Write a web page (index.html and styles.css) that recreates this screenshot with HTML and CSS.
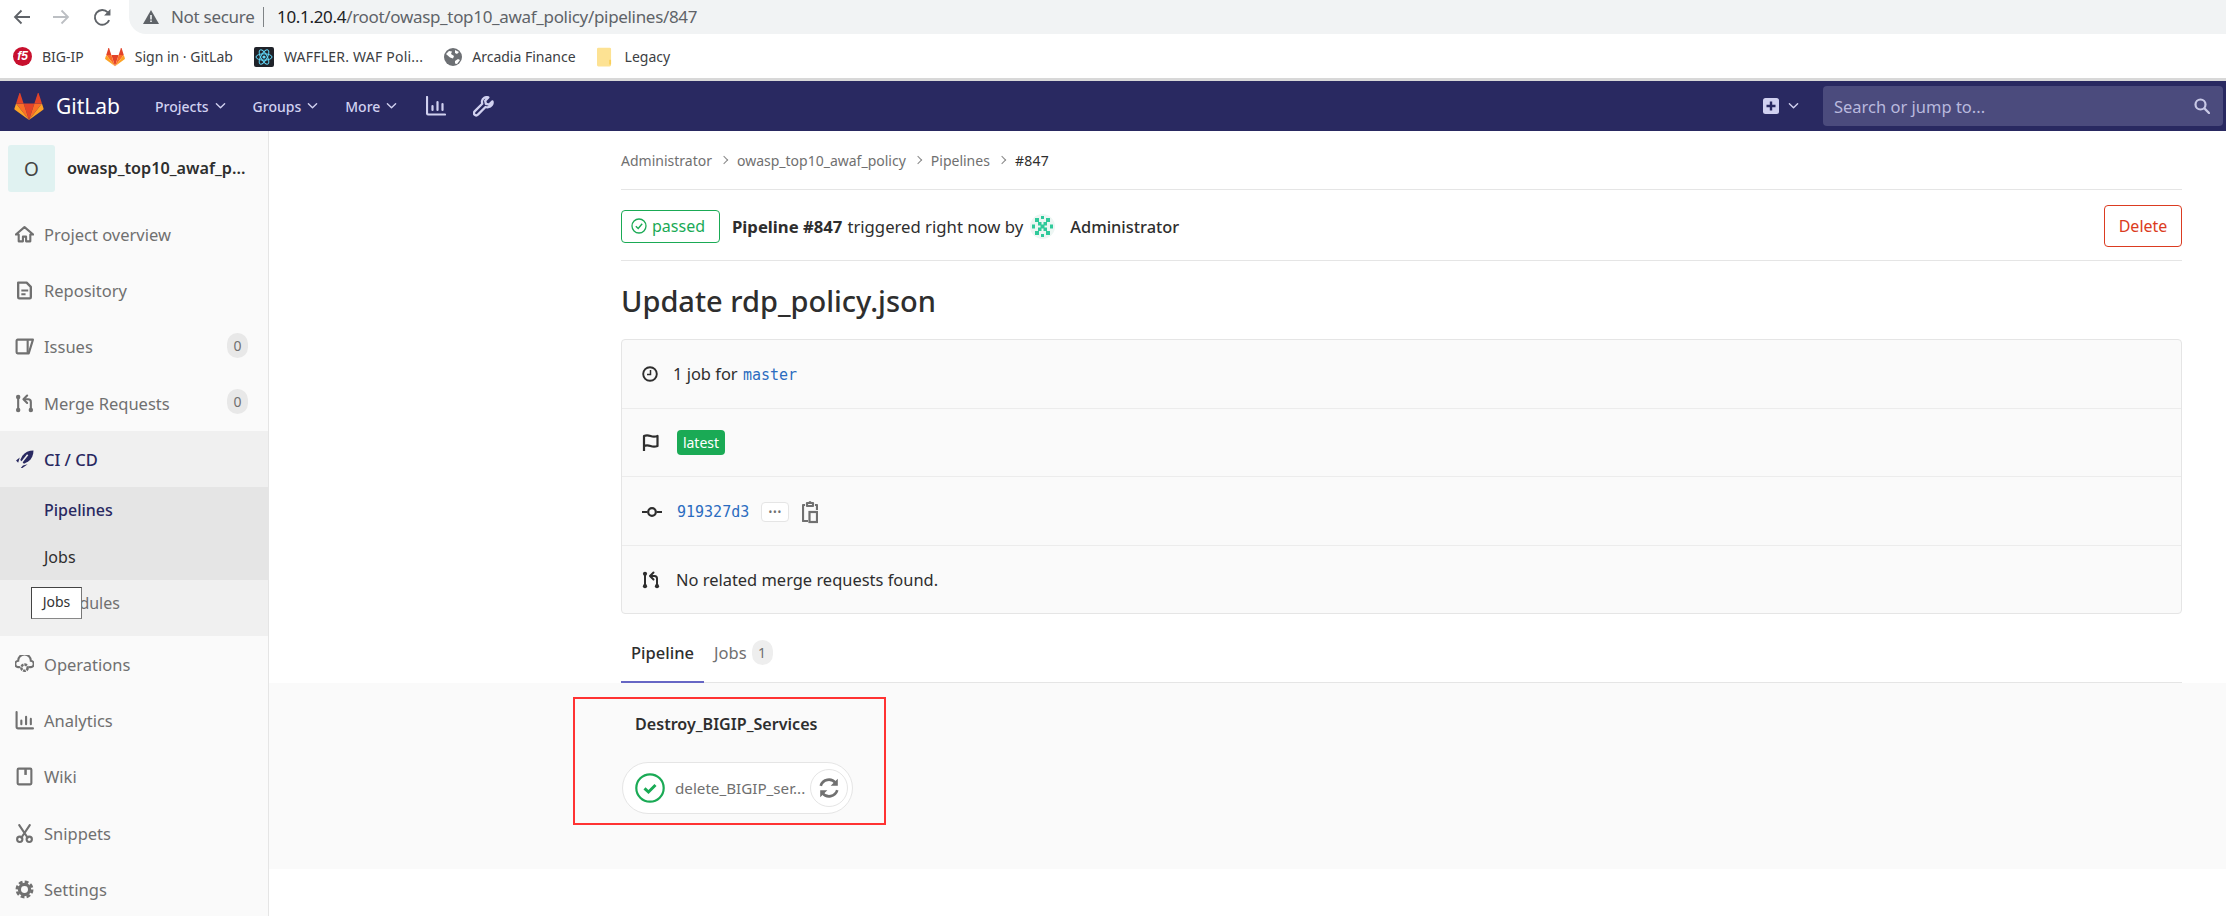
FILE: index.html
```html
<!DOCTYPE html>
<html lang="en">
<head>
<meta charset="utf-8">
<title>Pipeline #847</title>
<link rel="stylesheet" href="styles.css">
</head>
<body>
<svg class="defs" width="0" height="0" aria-hidden="true">
  <defs>
    <symbol id="tanuki" viewBox="0 0 36 33">
      <path fill="#e24329" d="M18 33l6.600-20.300H11.400z"/>
      <path fill="#fc6d26" d="M18 33L11.400 12.700H2.200z"/>
      <path fill="#fca326" d="M2.200 12.700L.2 18.900c-.2.600 0 1.200.5 1.600L18 33z"/>
      <path fill="#e24329" d="M2.200 12.700h9.200L7.400.6c-.2-.6-1.100-.6-1.300 0z"/>
      <path fill="#fc6d26" d="M18 33l6.600-20.300h9.200z"/>
      <path fill="#fca326" d="M33.800 12.700l2 6.200c.2.600 0 1.200-.5 1.600L18 33z"/>
      <path fill="#e24329" d="M33.800 12.700h-9.200L28.600.6c.2-.6 1.100-.6 1.300 0z"/>
    </symbol>
    <symbol id="chev" viewBox="0 0 12 8">
      <path d="M1.500 1.500L6 6l4.500-4.500" fill="none" stroke="currentColor" stroke-width="1.500" stroke-linecap="round" stroke-linejoin="round"/>
    </symbol>
    <symbol id="merge" viewBox="0 0 18 18">
      <g fill="none" stroke="currentColor" stroke-width="2" stroke-linecap="round" stroke-linejoin="round">
        <path d="M3 3v11.500"/><path d="M15 14.500V7.500c0-1.500-1-2.500-2.500-2.500H9"/><path d="M11.500 1.500L8 5l3.500 3.500"/>
      </g>
      <circle cx="3" cy="2.800" r="2.100" fill="currentColor"/><circle cx="3" cy="15.200" r="2.100" fill="currentColor"/><circle cx="15" cy="15.200" r="2.100" fill="currentColor"/>
    </symbol>
  </defs>
</svg>

<header class="chrome">
  <div class="chrome-bar">
    <svg class="ch-ico back" viewBox="0 0 18 16"><path d="M17 8H2M8.500 1.500L2 8l6.500 6.500" fill="none" stroke="currentColor" stroke-width="1.800"/></svg>
    <svg class="ch-ico fwd" viewBox="0 0 18 16"><path d="M1 8h15M9.500 1.500L16 8l-6.500 6.500" fill="none" stroke="currentColor" stroke-width="1.800"/></svg>
    <svg class="ch-ico reload" viewBox="0 0 18 18"><path d="M15.300 11.500A7 7 0 1 1 14 4.200" fill="none" stroke="currentColor" stroke-width="1.800"/><path d="M16.500 1v6h-6z" fill="currentColor"/></svg>
    <div class="omnibox">
      <svg class="warn" viewBox="0 0 16 14"><path d="M8 0l8 14H0z" fill="#5f6368"/><path d="M7.200 5h1.600v4.500H7.200zM7.200 10.500h1.600V12H7.200z" fill="#f1f3f4"/></svg>
      <span class="not-secure">Not secure</span>
      <span class="omni-sep"></span>
      <span class="url"><b>10.1.20.4</b>/root/owasp_top10_awaf_policy/pipelines/847</span>
    </div>
  </div>
  <nav class="bookmarks">
    <a class="bm"><span class="f5">f5</span>BIG-IP</a>
    <a class="bm"><svg class="bm-ico"><use href="#tanuki"/></svg>Sign in · GitLab</a>
    <a class="bm bm-wide"><svg class="bm-ico" viewBox="0 0 20 20"><rect width="20" height="20" rx="2" fill="#20232a"/><g fill="none" stroke="#61dafb" stroke-width="1"><ellipse cx="10" cy="10" rx="8" ry="3.200"/><ellipse cx="10" cy="10" rx="8" ry="3.200" transform="rotate(60 10 10)"/><ellipse cx="10" cy="10" rx="8" ry="3.200" transform="rotate(120 10 10)"/></g><circle cx="10" cy="10" r="1.600" fill="#61dafb"/></svg>WAFFLER. WAF Poli...</a>
    <a class="bm"><svg class="bm-ico globe" viewBox="0 0 18 18"><circle cx="9" cy="9" r="9" fill="#6d7074"/><path d="M2 6l3-3 3 .5-1 2.500 3 2-1 2.500-3-1zM11 13l3-2 2 1-3 4-2-.5zM11 2l4 2-2 2-2-1z" fill="#fff"/></svg>Arcadia Finance</a>
    <a class="bm"><svg class="bm-ico folder" viewBox="0 0 16 20"><path d="M1.500 0h12A1.500 1.500 0 0 1 15 1.500V18.500A1.500 1.500 0 0 1 13.500 20h-12A1.500 1.500 0 0 1 0 18.500V1.500A1.500 1.500 0 0 1 1.500 0z" fill="#fde293"/><path d="M13 13h2v5h-2z" fill="#f9cf5a"/></svg>Legacy</a>
  </nav>
</header>

<header class="navbar">
  <a class="brand"><svg class="logo"><use href="#tanuki"/></svg><span>GitLab</span></a>
  <a class="nav-link">Projects<svg class="chev"><use href="#chev"/></svg></a>
  <a class="nav-link">Groups<svg class="chev"><use href="#chev"/></svg></a>
  <a class="nav-link">More<svg class="chev"><use href="#chev"/></svg></a>
  <svg class="nav-ico" viewBox="0 0 20 20"><path d="M1 1v16c0 1 .5 1.500 1.500 1.500H19" fill="none" stroke="currentColor" stroke-width="2.200" stroke-linecap="round"/><path d="M6.500 10v4M11.500 6v8M16.500 8v6" stroke="currentColor" stroke-width="2.200" stroke-linecap="round"/></svg>
  <svg class="nav-ico wrench" viewBox="0 0 20 20"><path d="M18.500 5.200l-3.200 3-3-.7-.7-3 3-3.200c-2.700-.8-5.500.7-6 3.500-.2 1 0 1.800.2 2.600l-7 7c-1.200 1.200-1.200 2.500-.3 3.400s2.200.9 3.400-.3l7-7c.8.300 1.700.4 2.600.2 2.800-.5 4.800-3.200 4-5.500z" fill="none" stroke="currentColor" stroke-width="2.200" stroke-linejoin="round"/></svg>
  <div class="nav-right">
    <svg class="plus" viewBox="0 0 16 16"><rect width="16" height="16" rx="2.500" fill="#d1d1f0"/><path d="M8 3.500v9M3.500 8h9" stroke="#292961" stroke-width="2.400"/></svg>
    <svg class="chev plus-chev"><use href="#chev"/></svg>
    <div class="search">
      <span>Search or jump to...</span>
      <svg class="search-ico" viewBox="0 0 16 16"><circle cx="6.500" cy="6.500" r="5" fill="none" stroke="currentColor" stroke-width="2.200"/><path d="M10.500 10.500L15 15" stroke="currentColor" stroke-width="2.400" stroke-linecap="round"/></svg>
    </div>
  </div>
</header>

<div class="shell">
  <aside class="sidebar">
    <div class="project">
      <span class="avatar">O</span>
      <span class="project-name">owasp_top10_awaf_p...</span>
    </div>
    <ul class="menu">
      <li class="item"><svg class="ico" viewBox="0 0 18 18"><path d="M9 2L.8 9h2.700v6.500h4V11h3v4.500h4V9h2.700z" fill="none" stroke="currentColor" stroke-width="2" stroke-linejoin="round"/></svg>Project overview</li>
      <li class="item"><svg class="ico" viewBox="0 0 18 18"><path d="M3 1.500h8l4 4v10a1 1 0 0 1-1 1H4a1 1 0 0 1-1-1z" fill="none" stroke="currentColor" stroke-width="2.200" stroke-linejoin="round"/><path d="M6 9h6.500M6 12.500h4" stroke="currentColor" stroke-width="2"/></svg>Repository</li>
      <li class="item"><svg class="ico" viewBox="0 0 18 18"><path d="M2.500 2.500H17L13 15.500H2.500a1 1 0 0 1-1-1v-11a1 1 0 0 1 1-1z" fill="none" stroke="currentColor" stroke-width="2" stroke-linejoin="round"/><path d="M12 3v12" stroke="currentColor" stroke-width="2"/></svg>Issues<span class="count">0</span></li>
      <li class="item"><svg class="ico"><use href="#merge"/></svg>Merge Requests<span class="count">0</span></li>
      <li class="group">
        <div class="item active-head"><svg class="ico" viewBox="0 0 18 18"><path d="M17.500.5c-4.500 0-8 1.500-10.500 5L5 9.500l3.500 3.500 4-2c3.500-2.500 5-6 5-10.500z" fill="currentColor"/><path d="M12 4.500L6 12" stroke="#f0f0f0" stroke-width="1.500"/><path d="M1 10l3.500-3L3 12zM7 17l5-3.500-4.500 1.200-2 2.300z" fill="currentColor"/></svg>CI / CD</div>
        <ul class="submenu">
          <li class="sub-hi sub-active">Pipelines</li>
          <li class="sub-hi sub-jobs">Jobs</li>
          <li class="sub-plain">Schedules<span class="tip">Jobs</span></li>
        </ul>
      </li>
      <li class="item"><svg class="ico" viewBox="0 0 18 18"><path d="M4 11.500H3.500a3 3 0 0 1-.5-6 6 6 0 0 1 12 0 3 3 0 0 1-.5 6H14" fill="none" stroke="currentColor" stroke-width="2" stroke-linecap="round"/><circle cx="9" cy="12" r="3" fill="none" stroke="currentColor" stroke-width="2.400" stroke-dasharray="2.600 .8"/></svg>Operations</li>
      <li class="item"><svg class="ico" viewBox="0 0 18 18"><path d="M1.500 1v14c0 1 .5 1.500 1.500 1.500h14" fill="none" stroke="currentColor" stroke-width="2" stroke-linecap="round"/><path d="M6 9v3.500M10.500 5.500v7M15 7.500v5" stroke="currentColor" stroke-width="2" stroke-linecap="round"/></svg>Analytics</li>
      <li class="item"><svg class="ico" viewBox="0 0 18 18"><rect x="2.500" y="1.500" width="13" height="15" rx="1" fill="none" stroke="currentColor" stroke-width="2"/><path d="M10 2v5.500" stroke="currentColor" stroke-width="2.400"/></svg>Wiki</li>
      <li class="item"><svg class="ico" viewBox="0 0 18 18"><path d="M4 1l8 12M14 1L6 13" stroke="currentColor" stroke-width="2" stroke-linecap="round"/><circle cx="4.500" cy="14.500" r="2.500" fill="none" stroke="currentColor" stroke-width="2"/><circle cx="13.500" cy="14.500" r="2.500" fill="none" stroke="currentColor" stroke-width="2"/></svg>Snippets</li>
      <li class="item"><svg class="ico" viewBox="0 0 18 18"><circle cx="9" cy="9" r="4.800" fill="none" stroke="currentColor" stroke-width="3"/><circle cx="9" cy="9" r="7.200" fill="none" stroke="currentColor" stroke-width="2.600" stroke-dasharray="3.600 2.050"/></svg>Settings</li>
    </ul>
  </aside>

  <main class="main">
    <div class="container">
      <ol class="crumbs">
        <li>Administrator</li>
        <li class="crumb-sep"></li>
        <li>owasp_top10_awaf_policy</li>
        <li class="crumb-sep"></li>
        <li>Pipelines</li>
        <li class="crumb-sep"></li>
        <li class="crumb-current">#847</li>
      </ol>
      <div class="pipeline-head">
        <span class="status"><svg class="status-ico" viewBox="0 0 16 16"><circle cx="8" cy="8" r="7" fill="none" stroke="currentColor" stroke-width="1.300"/><path d="M4.800 8.200L7.200 10.500 11.200 5.800" fill="none" stroke="currentColor" stroke-width="1.400"/></svg>passed</span>
        <strong class="pipe-id">Pipeline #847</strong>
        <span class="pipe-by">triggered right now by</span>
        <svg class="identicon" viewBox="0 0 25 25"><circle cx="12.500" cy="12.500" r="12.500" fill="#edf6f3"/><g fill="#2fc99a"><rect x="5" y="4" width="4" height="4"/><rect x="16" y="4" width="4" height="4"/><rect x="8" y="8" width="3.500" height="3.500"/><rect x="13.500" y="8" width="3.500" height="3.500"/><rect x="10.500" y="10.500" width="4" height="4"/><rect x="8" y="13.500" width="3.500" height="3.500"/><rect x="13.500" y="13.500" width="3.500" height="3.500"/><rect x="5" y="17" width="4" height="4"/><rect x="16" y="17" width="4" height="4"/><rect x="2" y="10.500" width="3" height="4"/><rect x="20" y="10.500" width="3" height="4"/><rect x="11" y="2" width="3" height="3"/><rect x="11" y="20" width="3" height="3"/></g></svg>
        <span class="pipe-user">Administrator</span>
        <button class="delete">Delete</button>
      </div>
      <h1 class="title">Update rdp_policy.json</h1>
      <section class="card">
        <div class="card-row"><svg class="card-ico" viewBox="0 0 16 16"><circle cx="8" cy="8" r="6.800" fill="none" stroke="currentColor" stroke-width="1.900"/><path d="M8.500 4v4.500H5" fill="none" stroke="currentColor" stroke-width="1.500"/></svg><span>1 job for <code class="ref">master</code></span></div>
        <div class="card-row"><svg class="card-ico flag" viewBox="0 0 18 18"><path d="M2 17V2c2-1 4-1 6.500 0s4.500 1 7 0v10c-2.500 1-4.500 1-7 0s-4.500-1-6.500 0" fill="none" stroke="currentColor" stroke-width="2.200" stroke-linejoin="round"/></svg><span class="tag">latest</span></div>
        <div class="card-row row-commit"><svg class="card-ico commit" viewBox="0 0 20 12"><circle cx="10" cy="6" r="3.800" fill="none" stroke="currentColor" stroke-width="2.200"/><path d="M0 6h5.500M14.500 6H20" stroke="currentColor" stroke-width="2.200"/></svg><code class="sha">919327d3</code><span class="dots">•••</span><svg class="clip" viewBox="0 0 16 24"><path d="M5 3h6v3H5zM3 5H1v16h5M13 5h2v5" fill="none" stroke="currentColor" stroke-width="2.200" stroke-linejoin="round"/><circle cx="8" cy="2.500" r="1.500" fill="currentColor"/><rect x="7.500" y="12" width="7.500" height="10" fill="none" stroke="currentColor" stroke-width="2.200"/></svg></div>
        <div class="card-row"><svg class="card-ico mr"><use href="#merge"/></svg><span class="no-mr">No related merge requests found.</span></div>
      </section>
      <div class="tabs">
        <span class="tab tab-active">Pipeline</span>
        <span class="tab">Jobs<span class="tab-count">1</span></span>
      </div>
    </div>
    <div class="graph-band">
      <div class="highlight">
        <div class="stage-title">Destroy_BIGIP_Services</div>
        <div class="job">
          <svg class="job-status" viewBox="0 0 30 30"><circle cx="15" cy="15" r="13.700" fill="#fff" stroke="#1aaa55" stroke-width="2.200"/><path d="M9.500 15.300l4 3.700 7-7" fill="none" stroke="#1aaa55" stroke-width="3"/></svg>
          <span class="job-name">delete_BIGIP_ser...</span>
          <span class="retry"><svg viewBox="0 0 20 20"><path d="M2.500 8A7.700 7.700 0 0 1 16 5.500M17.500 12A7.700 7.700 0 0 1 4 14.500" fill="none" stroke="currentColor" stroke-width="2.400"/><path d="M18 1.500V8h-6.500zM2 18.500V12h6.500z" fill="currentColor"/></svg></span>
        </div>
      </div>
    </div>
  </main>
</div>
</body>
</html>
```
FILE: styles.css
```css
* { box-sizing: border-box; }
html, body { margin: 0; padding: 0; }
body {
  width: 2226px;
  height: 916px;
  overflow: hidden;
  background: #fff;
  font-family: "Noto Sans", "Open Sans", "Liberation Sans", sans-serif;
  color: #2e2e2e;
  display: flex;
  flex-direction: column;
}
ul, ol { list-style: none; margin: 0; padding: 0; }
svg { display: block; flex: none; }
.defs { position: absolute; }

/* browser chrome */
.chrome { flex: none; }
.chrome-bar { height: 34px; display: flex; align-items: flex-start; }
.ch-ico { width: 18px; height: 16px; margin-top: 9px; color: #5f6368; }
.back { margin-left: 13px; }
.fwd { margin-left: 21px; color: #bcbfc3; }
.reload { width: 19px; height: 19px; margin-left: 23px; margin-top: 8px; }
.omnibox {
  flex: 1;
  height: 34px;
  margin-left: 17px;
  background: #f1f3f4;
  border-radius: 0 0 0 17px;
  display: flex;
  align-items: center;
  font-size: 17px;
  color: #5f6368;
  padding-bottom: 1px;
}
.warn { width: 16px; height: 14px; margin-left: 14px; }
.not-secure { margin-left: 12px; width: 84px; letter-spacing: -.3px; white-space: nowrap; }
.omni-sep { width: 1px; height: 20px; background: #7f8386; margin-left: 8px; }
.url { margin-left: 13px; letter-spacing: -.32px; white-space: nowrap; }
.url b { font-weight: 400; color: #202124; }
.bookmarks {
  height: 47px;
  padding: 1px 0 0 13px;
  display: flex;
  align-items: center;
  gap: 21px;
  font-size: 14px;
  color: #3c4043;
  border-bottom: 3px solid #d8d8d8;
}
.bm { display: flex; align-items: center; gap: 10px; white-space: nowrap; }
.bm-wide { letter-spacing: .22px; }
.bm-ico { width: 20px; height: 20px; }
.globe { width: 18px; height: 18px; }
.folder { width: 15px; height: 20px; margin-right: 3px; }
.f5 {
  width: 19px; height: 19px; border-radius: 50%;
  background: #c8102e;
  color: #fff;
  font: italic 700 12px/18px "Liberation Sans", sans-serif;
  text-align: center;
}

/* top nav */
.navbar {
  flex: none;
  height: 50px;
  background: #292961;
  display: flex;
  align-items: center;
  color: #d1d1f0;
  font-size: 14px;
  font-weight: 500;
}
.brand { display: flex; align-items: center; color: #fff; font-size: 21px; font-weight: 400; margin-left: 14px; width: 141px; }
.logo { width: 30px; height: 27px; margin-right: 12px; }
.nav-link { display: flex; align-items: center; gap: 6px; margin-right: 27px; white-space: nowrap; }
.chev { width: 11px; height: 8px; }
.nav-ico { width: 20px; height: 20px; margin-left: 2px; margin-right: 25px; }
.wrench { width: 21px; height: 21px; }
.nav-right { margin-left: auto; display: flex; align-items: center; }
.plus { width: 16px; height: 16px; }
.plus-chev { margin-left: 9px; }
.search {
  width: 400px;
  height: 40px;
  margin: 0 3px 0 24px;
  background: #4b4b7d;
  border-radius: 4px;
  display: flex;
  align-items: center;
  justify-content: space-between;
  padding: 0 13px 0 11px;
  font-size: 16.500px;
  font-weight: 400;
  color: #b9b9de;
}
.search-ico { width: 16px; height: 16px; color: #c9c9e6; }

/* layout */
.shell { flex: 1; display: flex; min-height: 0; }
.sidebar {
  flex: none;
  width: 269px;
  background: #fafafa;
  border-right: 1px solid #e5e5e5;
  font-size: 16.500px;
  color: #707070;
}
.project { height: 75px; padding: 14px 0 0 8px; display: flex; align-items: flex-start; }
.avatar {
  width: 47px; height: 47px;
  border-radius: 3px;
  background: #e0f2f1;
  color: #444;
  font-size: 19px;
  display: flex; align-items: center; justify-content: center;
}
.project-name { margin: 11px 0 0 12px; font-size: 16.200px; font-weight: 600; color: #2e2e2e; white-space: nowrap; line-height: 24px; }
.item { height: 56.300px; display: flex; align-items: center; padding: 0 20px 0 15px; position: relative; }
.ico { width: 19px; height: 19px; margin-right: 10px; color: #707070; }
.count {
  margin-left: auto;
  width: 21px; height: 25px;
  border-radius: 11px;
  background: #e8e8e8;
  font-size: 14px;
  display: flex; align-items: center; justify-content: center;
  margin-top: -3px;
}
.group { background: #f0f0f0; height: 205px; }
.active-head { color: #292961; font-weight: 500; height: 56px; }
.active-head .ico { color: #292961; }
.submenu { font-size: 16px; }
.sub-hi { background: #e5e5e5; height: 46.500px; display: flex; align-items: center; padding-left: 44px; color: #2e2e2e; }
.sub-active { color: #292961; font-weight: 500; }
.sub-plain { position: relative; padding-left: 44px; height: 46px; line-height: 46px; color: #707070; }
.tip {
  position: absolute;
  left: 31px;
  top: 7px;
  width: 51px;
  height: 32px;
  background: #fff;
  border: 1px solid #444;
  border-right-color: #777;
  border-bottom-color: #888;
  font-size: 14px;
  line-height: 28px;
  text-align: center;
  color: #333;
}

.main { flex: 1; min-width: 0; }
.container { padding: 0 44px 0 352px; }
.crumbs {
  height: 59px;
  display: flex;
  align-items: center;
  gap: 8px;
  font-size: 14px;
  color: #707070;
  border-bottom: 1px solid #e5e5e5;
}
.crumb-sep { width: 6px; height: 6px; border-top: 1px solid #888; border-right: 1px solid #888; transform: rotate(45deg); margin: 0 1.500px; }
.crumb-current { color: #2e2e2e; letter-spacing: .3px; }
.pipeline-head {
  height: 71px;
  padding-top: 2px;
  display: flex;
  align-items: center;
  font-size: 16.700px;
  border-bottom: 1px solid #e5e5e5;
}
.status {
  width: 99px; height: 33px;
  border: 1px solid #1aaa55;
  border-radius: 4px;
  color: #1aaa55;
  display: flex; align-items: center;
  padding-left: 9px;
  gap: 5px;
  margin-right: 12px;
  font-size: 16px;
}
.status-ico { width: 16px; height: 16px; }
.pipe-id { font-weight: 700; margin-right: 5px; }
.identicon { width: 25px; height: 25px; margin: 0 15px 0 7px; }
.pipe-user { font-weight: 500; font-size: 16.400px; }
.delete {
  margin-left: auto;
  width: 78px; height: 42px;
  border: 1px solid #db3b21;
  border-radius: 4px;
  background: #fff;
  color: #db3b21;
  font: inherit;
  font-size: 16px;
  padding: 0;
}
.title { margin: 0; height: 78px; font-size: 29px; font-weight: 500; line-height: 80px; color: #2e2e2e; }
.card {
  height: 275px;
  background: #fafafa;
  border: 1px solid #e5e5e5;
  border-radius: 4px;
  font-size: 16.450px;
}
.card-row {
  height: 68.700px;
  display: flex;
  align-items: center;
  padding-left: 20px;
  border-bottom: 1px solid #ececec;
  color: #2e2e2e;
}
.row-commit { padding-top: 2px; }
.card-row:last-child { border-bottom: 0; height: auto; flex: 1; padding-top: 22px; }
.card-ico { width: 16px; height: 16px; margin-right: 15px; }
.flag { width: 18px; height: 18px; margin-right: 17px; }
.commit { width: 20px; height: 12px; margin-right: 15px; }
.mr { width: 18px; height: 18px; margin-right: 16px; }
.ref, .sha { font-family: "DejaVu Sans Mono", "Liberation Mono", monospace; font-size: 15px; color: #2b6cc0; }
.ref { margin-left: 1px; }
.tag {
  width: 48px; height: 25px;
  border-radius: 4px;
  background: #1aaa55;
  color: #fff;
  font-size: 14px;
  display: flex; align-items: center; justify-content: center;
}
.dots {
  width: 28px; height: 20px;
  margin-left: 12px;
  border: 1px solid #e5e5e5;
  border-radius: 4px;
  background: #fff;
  color: #707070;
  font-size: 10px;
  letter-spacing: .8px;
  display: flex; align-items: center; justify-content: center;
}
.clip { width: 16px; height: 24px; margin-left: 13px; color: #707070; }
.tabs {
  height: 69px;
  display: flex;
  align-items: stretch;
  gap: 10px;
  border-bottom: 1px solid #e5e5e5;
  font-size: 16.500px;
}
.tab { display: flex; align-items: center; color: #707070; padding: 17px 0 8px; }
.tab-active { width: 83px; justify-content: center; color: #2e2e2e; font-weight: 500; border-bottom: 2px solid #6666c4; margin-bottom: -1px; padding-bottom: 7px; }
.tab-count {
  width: 21px; height: 25px;
  margin-left: 5px;
  border-radius: 11px;
  background: #eee;
  color: #707070;
  font-size: 14px;
  display: flex; align-items: center; justify-content: center;
}
.graph-band { height: 186px; background: #fafafa; padding: 14px 0 0 304px; }
.highlight {
  width: 313px;
  height: 128px;
  border: 2px solid #f33;
  padding-top: 13px;
}
.stage-title { margin-left: 60px; font-size: 16.100px; font-weight: 600; line-height: 24px; color: #2e2e2e; white-space: nowrap; }
.job {
  width: 231px;
  height: 52px;
  margin: 26px 0 0 47px;
  background: #fff;
  border: 1px solid #e5e5e5;
  border-radius: 26px;
  display: flex;
  align-items: center;
  padding-left: 12px;
  font-size: 15.200px;
  color: #707070;
}
.job-status { width: 30px; height: 30px; }
.job-name { margin-left: 10px; width: 135px; white-space: nowrap; }
.retry {
  width: 38px; height: 38px;
  border-radius: 50%;
  border: 1px solid #e5e5e5;
  background: #fff;
  display: flex; align-items: center; justify-content: center;
  color: #707070;
}
.retry svg { width: 22px; height: 22px; }
```
